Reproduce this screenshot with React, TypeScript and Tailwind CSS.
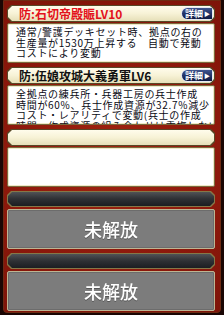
import React from "react";

const chamfer =
  "[clip-path:polygon(4px_0,calc(100%_-_4px)_0,100%_4px,100%_calc(100%_-_4px),calc(100%_-_4px)_100%,4px_100%,0_calc(100%_-_4px),0_4px)]";

function DetailButton() {
  return (
    <div className="h-[13px] w-[32px] rounded-l-full rounded-r-[7px] bg-[#e4e8f2] p-px shrink-0">
      <div className="h-full w-full rounded-l-full rounded-r-[6px] bg-gradient-to-b from-[#40558f] via-[#223468] to-[#101a42] flex items-center pl-[3px] pr-[1px] gap-[1px]">
        <span className="text-[9px] leading-[9px] font-bold text-white whitespace-nowrap">詳細</span>
        <span className="text-[6px] leading-[6px] text-white">▶</span>
      </div>
    </div>
  );
}

function TitleBar({ title, color, dark }: { title?: string; color?: string; dark?: boolean }) {
  return (
    <div className={`${dark ? "h-[16px] bg-[#857848]" : "h-[17px] bg-[#574826]"} p-px ${chamfer}`}>
      <div
        className={`h-full ${chamfer} flex items-center pl-[11px] pr-[1px] ${
          dark
            ? "bg-gradient-to-b from-[#505256] via-[#2e3034] to-[#1c1e22]"
            : "bg-gradient-to-b from-[#fffcec] via-[#f7f2d6] to-[#e6dfb8]"
        }`}
      >
        {title && (
          <span className={`text-[12px] leading-[14px] font-bold whitespace-nowrap ${color}`}>{title}</span>
        )}
        {title && <div className="ml-auto"><DetailButton /></div>}
      </div>
    </div>
  );
}

function Card({ title, color, lines }: { title?: string; color?: string; lines?: string[] }) {
  return (
    <div className="flex flex-col gap-px">
      <TitleBar title={title} color={color} />
      <div className="h-[40px] bg-white border border-[#7a6a3e] rounded-[2px] shadow-[inset_0_0_0_1px_#efe9c8] overflow-hidden pl-[8px] pt-[3px]">
        {lines?.map((l, i) => (
          <div key={i} className="text-[10px] leading-[10.5px] tracking-[0.7px] text-[#0a0a14] whitespace-nowrap">
            {l}
          </div>
        ))}
      </div>
    </div>
  );
}

function LockedCard() {
  return (
    <div className="flex flex-col gap-[2px]">
      <TitleBar dark />
      <div className="h-[40px] bg-[#7c7c7c] border border-[#bdb593] rounded-[2px] shadow-[inset_0_0_0_1px_#6c6c6c] flex items-center justify-center">
        <span className="text-[18px] leading-[20px] text-white font-medium drop-shadow-[0_1px_0_rgba(0,0,0,0.3)]">未解放</span>
      </div>
    </div>
  );
}

export default function App() {
  return (
    <div className="w-[224px] h-[315px] bg-[#1a0604] overflow-hidden font-['Noto_Sans_CJK_JP','Noto_Sans',sans-serif]">
      <div className="ml-[3px] mr-[3px] h-[313px] rounded-b-[4px] border border-[#6e2a12] bg-[#8e190b] bg-[radial-gradient(circle_at_50%_50%,#a0240f_0%,#8c180b_60%,#7e1409_100%)] pl-[3px] pr-[5px] pt-[4px] flex flex-col gap-[4px]">
        <Card
          title="防:石切帝殿賑LV10"
          color="text-[#e3121c]"
          lines={["通常/警護デッキセット時、拠点の右の", "生産量が1530万上昇する　自動で発動", "コストにより変動"]}
        />
        <Card
          title="防:伍娘攻城大義勇軍LV6"
          color="text-[#111111]"
          lines={[
            "全拠点の練兵所・兵器工房の兵士作成",
            "時間が60%、兵士作成資源が32.7%減少",
            "コスト・レアリティで変動(兵士の作成",
            "時間、作成資源の組み合わせは重複しない",
          ]}
        />
        <Card />
        <LockedCard />
        <LockedCard />
      </div>
    </div>
  );
}
